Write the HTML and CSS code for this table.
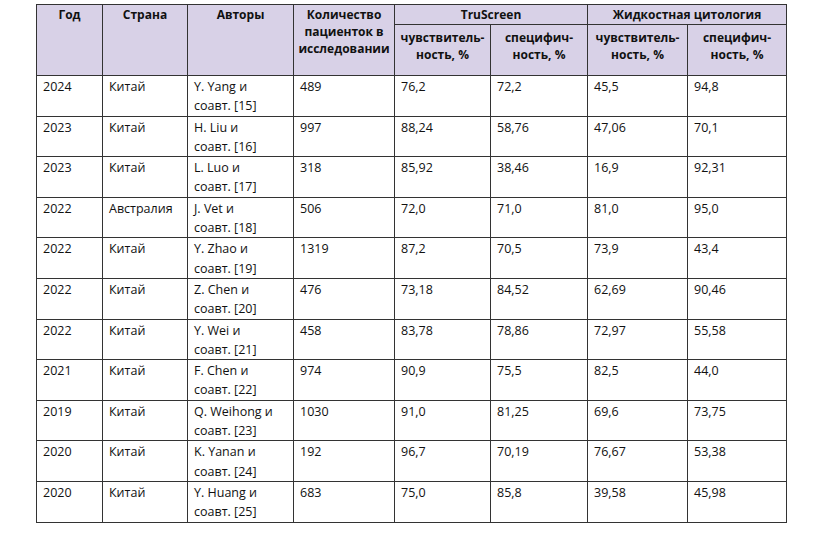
FILE: index.html
```html
<!DOCTYPE html>
<html lang="ru">
<head>
<meta charset="utf-8">
<link rel="stylesheet" href="styles.css">
</head>
<body>
<table class="data">
  <colgroup>
    <col class="c-year"><col class="c-country"><col class="c-auth"><col class="c-num">
    <col class="c-ts1"><col class="c-ts2"><col class="c-lc1"><col class="c-lc2">
  </colgroup>
  <thead>
    <tr class="h1">
      <th rowspan="2">Год</th>
      <th rowspan="2">Страна</th>
      <th rowspan="2">Авторы</th>
      <th rowspan="2">Количество пациенток в исследовании</th>
      <th colspan="2" class="grp">TruScreen</th>
      <th colspan="2" class="grp">Жидкостная цитология</th>
    </tr>
    <tr class="h2">
      <th>чувствитель-<br>ность, %</th>
      <th>специфич-<br>ность, %</th>
      <th>чувствитель-<br>ность, %</th>
      <th>специфич-<br>ность, %</th>
    </tr>
  </thead>
  <tbody>
    <tr><td>2024</td><td>Китай</td><td>Y. Yang и<br>соавт. [15]</td><td>489</td><td>76,2</td><td>72,2</td><td>45,5</td><td>94,8</td></tr>
    <tr><td>2023</td><td>Китай</td><td>H. Liu и<br>соавт. [16]</td><td>997</td><td>88,24</td><td>58,76</td><td>47,06</td><td>70,1</td></tr>
    <tr><td>2023</td><td>Китай</td><td>L. Luo и<br>соавт. [17]</td><td>318</td><td>85,92</td><td>38,46</td><td>16,9</td><td>92,31</td></tr>
    <tr><td>2022</td><td>Австралия</td><td>J. Vet и<br>соавт. [18]</td><td>506</td><td>72,0</td><td>71,0</td><td>81,0</td><td>95,0</td></tr>
    <tr><td>2022</td><td>Китай</td><td>Y. Zhao и<br>соавт. [19]</td><td>1319</td><td>87,2</td><td>70,5</td><td>73,9</td><td>43,4</td></tr>
    <tr><td>2022</td><td>Китай</td><td>Z. Chen и<br>соавт. [20]</td><td>476</td><td>73,18</td><td>84,52</td><td>62,69</td><td>90,46</td></tr>
    <tr><td>2022</td><td>Китай</td><td>Y. Wei и<br>соавт. [21]</td><td>458</td><td>83,78</td><td>78,86</td><td>72,97</td><td>55,58</td></tr>
    <tr><td>2021</td><td>Китай</td><td>F. Chen и<br>соавт. [22]</td><td>974</td><td>90,9</td><td>75,5</td><td>82,5</td><td>44,0</td></tr>
    <tr><td>2019</td><td>Китай</td><td>Q. Weihong и<br>соавт. [23]</td><td>1030</td><td>91,0</td><td>81,25</td><td>69,6</td><td>73,75</td></tr>
    <tr><td>2020</td><td>Китай</td><td>K. Yanan и<br>соавт. [24]</td><td>192</td><td>96,7</td><td>70,19</td><td>76,67</td><td>53,38</td></tr>
    <tr><td>2020</td><td>Китай</td><td>Y. Huang и<br>соавт. [25]</td><td>683</td><td>75,0</td><td>85,8</td><td>39,58</td><td>45,98</td></tr>
  </tbody>
</table>
</body>
</html>
```

FILE: styles.css
```css
html, body {
  margin: 0;
  padding: 0;
  background: #ffffff;
}

body {
  font-family: "Open Sans", "Noto Sans", sans-serif;
  font-size: 12px;
  color: #111111;
}

.data {
  margin: 4px 0 0 36px;
  width: 750px;
  table-layout: fixed;
  border-collapse: collapse;
}

.c-year { width: 66px; }
.c-country { width: 85px; }
.c-auth { width: 106px; }
.c-num { width: 101px; }
.c-ts1 { width: 96px; }
.c-ts2 { width: 97px; }
.c-lc1 { width: 100px; }
.c-lc2 { width: 99px; }

.data th,
.data td {
  border: 1px solid #333333;
  vertical-align: top;
}

.data th {
  background: #d8d1e7;
  font-weight: 700;
  text-align: center;
  line-height: 17px;
  padding: 1px 4px 0;
}

.h1 { height: 20px; }
.h2 { height: 51px; }

.h2 th {
  padding-top: 4px;
}

.data td {
  font-size: 12.5px;
  line-height: 19.3px;
  padding: 1px 6px 0;
  text-align: left;
  overflow: hidden;
}

.data tbody tr {
  height: 40.6px;
}
```
